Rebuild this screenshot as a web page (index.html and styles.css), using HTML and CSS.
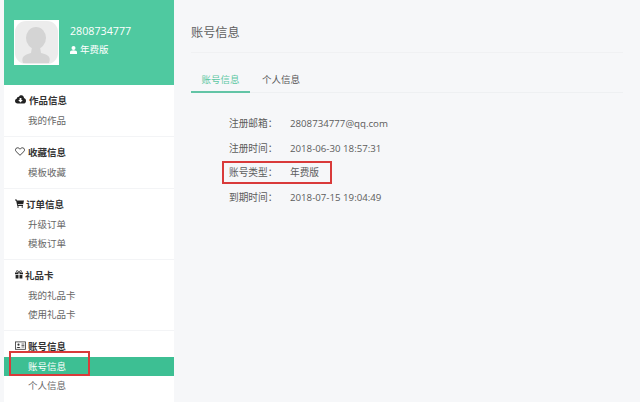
FILE: index.html
```html
<!DOCTYPE html>
<html lang="zh">
<head>
<meta charset="utf-8">
<title>账号信息</title>
<link rel="stylesheet" href="styles.css">
</head>
<body>
<div class="page">
  <aside class="sidebar">
    <div class="profile">
      <div class="avatar">
        <svg width="45" height="45" viewBox="0 0 45 45"><rect width="45" height="45" fill="#fff"/><rect x="1" y="1" width="43" height="43" rx="11" fill="#ececec"/><ellipse cx="22" cy="18" rx="10" ry="11" fill="#d4d4d4"/><path d="M9 43 C7 37 10 35 17 33 L18 27 H26 L27 33 C35 35 37 37 35 43 Z" fill="#d4d4d4"/></svg>
      </div>
      <div class="who">
        <div class="uid">2808734777</div>
        <div class="plan"><svg width="7" height="8" viewBox="0 0 7 8"><circle cx="3.5" cy="2" r="2" fill="#fff"/><path d="M0 8V6.2C0 5 1.5 4.3 3.5 4.3S7 5 7 6.2V8Z" fill="#fff"/></svg>年费版</div>
      </div>
    </div>
    <section class="group">
      <h3 class="group-title"><svg class="ico" width="11" height="9" viewBox="0 0 11 9"><path d="M2.6 8.6C1.1 8.6 0 7.5 0 6.1 0 5 .7 4.1 1.7 3.8 1.8 2.5 2.9 1.6 4 1.7 4.6.7 5.5.2 6.5.3 8 .4 9 1.6 9 3.1 10.2 3.5 11 4.6 11 5.9 11 7.4 9.8 8.6 8.3 8.6Z" fill="#222"/><path d="M4.6 2.9H6.4V5H7.8L5.5 7.4 3.2 5H4.6Z" fill="#fff"/></svg>作品信息</h3>
      <a class="item">我的作品</a>
    </section>
    <section class="group">
      <h3 class="group-title"><svg class="ico" width="10" height="9" viewBox="0 0 10 9"><path d="M5 8.3 1.1 4.5C-.1 3.2.5 1 2.3.8 3.4.7 4.4 1.3 5 2.2 5.6 1.3 6.6.7 7.7.8 9.5 1 10.1 3.2 8.9 4.5Z" fill="none" stroke="#333" stroke-width=".9"/></svg>收藏信息</h3>
      <a class="item">模板收藏</a>
    </section>
    <section class="group">
      <h3 class="group-title tight"><svg class="ico" width="9" height="9" viewBox="0 0 9 9"><path d="M0 .6H1.7L2 1.6H9L8.2 5.3H2.8L3 6.1H8V6.9H2.3L1.1 1.4H0Z" fill="#222"/><circle cx="3" cy="8" r=".8" fill="#222"/><circle cx="7.3" cy="8" r=".8" fill="#222"/></svg>订单信息</h3>
      <a class="item">升级订单</a>
      <a class="item">模板订单</a>
    </section>
    <section class="group">
      <h3 class="group-title tight"><svg class="ico" width="8" height="9" viewBox="0 0 8 9"><path d="M0 2.4H3.5V4.2H0ZM4.5 2.4H8V4.2H4.5ZM.6 4.9H3.5V8.6H.6ZM4.5 4.9H7.4V8.6H4.5Z" fill="#222"/><path d="M4 2.4C2.5 2.4 1.4 2 1.4 1.2 1.4.2 3.3.2 4 2.1 4.7.2 6.6.2 6.6 1.2 6.6 2 5.5 2.4 4 2.4Z" fill="none" stroke="#222" stroke-width=".7"/></svg>礼品卡</h3>
      <a class="item">我的礼品卡</a>
      <a class="item">使用礼品卡</a>
    </section>
    <section class="group last">
      <h3 class="group-title tight"><svg class="ico wide" width="11" height="9" viewBox="0 0 11 9"><rect x=".4" y=".9" width="10.2" height="7.4" fill="none" stroke="#333" stroke-width=".8"/><circle cx="3.5" cy="3.7" r="1.1" fill="#333"/><path d="M1.7 7C1.7 5.6 5.3 5.6 5.3 7Z" fill="#333"/><path d="M6.5 3H9.4M6.5 4.5H9.4M6.5 6H9.4" stroke="#333" stroke-width=".7"/></svg>账号信息</h3>
      <a class="item active">账号信息</a>
      <a class="item">个人信息</a>
    </section>
  </aside>
  <main class="content">
    <h1 class="heading">账号信息</h1>
    <nav class="tabs">
      <a class="tab current">账号信息</a>
      <a class="tab">个人信息</a>
    </nav>
    <dl class="info">
      <div class="row"><dt>注册邮箱：</dt><dd>2808734777@qq.com</dd></div>
      <div class="row"><dt>注册时间：</dt><dd>2018-06-30 18:57:31</dd></div>
      <div class="row"><dt>账号类型：</dt><dd>年费版</dd></div>
      <div class="row"><dt>到期时间：</dt><dd>2018-07-15 19:04:49</dd></div>
    </dl>
  </main>
  <div class="mark mark-nav"></div>
  <div class="mark mark-type"></div>
</div>
</body>
</html>
```
FILE: styles.css
```css
* { box-sizing: border-box; }
html, body { margin: 0; padding: 0; }
body {
  width: 640px;
  height: 402px;
  overflow: hidden;
  background: #f6f7f9;
  font-family: "Open Sans", "Noto Sans CJK SC", sans-serif;
  color: #666;
}
.page { position: relative; display: flex; width: 640px; height: 402px; overflow: hidden; padding-left: 4px; }
.sidebar { width: 170px; flex: none; background: #fff; height: 402px; }
.profile {
  height: 85px;
  background: #4fc9a0;
  display: flex;
  align-items: flex-start;
  gap: 11px;
  padding: 20px 0 0 10px;
}
.avatar { width: 45px; height: 45px; flex: none; }
.avatar svg { display: block; }
.who { color: #fff; padding-top: 3px; }
.uid { font-size: 10.7px; line-height: 16px; }
.plan { font-size: 9.5px; line-height: 16px; margin-top: 3px; display: flex; align-items: center; gap: 3px; }
.group { padding-bottom: 6px; border-bottom: 1px solid #f3f4f6; }
.group.last { border-bottom: 0; }
.group-title {
  margin: 0;
  height: 26px;
  padding: 3px 0 0 11px;
  display: flex;
  align-items: center;
  gap: 3px;
  font-size: 9.5px;
  font-weight: 700;
  color: #333;
}
.group-title.tight { gap: 2px; }
.ico { flex: none; }
.item {
  display: block;
  height: 19px;
  line-height: 19px;
  padding-left: 24px;
  font-size: 9.5px;
  color: #666;
}
.item.active { background: #3dbf93; color: #fff; }
.content { flex: 1; padding: 0 17px; }
.heading {
  margin: 0;
  height: 53px;
  padding-top: 23px;
  line-height: 20px;
  font-size: 12.2px;
  font-weight: 400;
  color: #606060;
  border-bottom: 1px solid #f0f1f3;
}
.tabs { display: flex; height: 40px; padding-top: 18px; border-bottom: 1px solid #eef0f2; }
.tab {
  width: 59px;
  height: 22px;
  line-height: 18px;
  text-align: center;
  font-size: 9.5px;
  color: #555;
}
.tab.current { color: #5cc7a3; border-bottom: 2px solid #62c4a6; }
.tab + .tab { width: 62px; }
.info { margin: 19px 0 0; padding: 0; }
.row { display: flex; height: 24.6px; line-height: 24.6px; font-size: 9.7px; }
.row dt { width: 99px; padding-left: 38px; color: #5c5c5c; }
.row dd { margin: 0; color: #5c5c5c; }
.mark { position: absolute; border: 2px solid #d93a3a; }
.mark-nav { left: 9px; top: 351px; width: 81px; height: 25px; }
.mark-type { left: 222px; top: 161px; width: 110px; height: 23px; }
```
